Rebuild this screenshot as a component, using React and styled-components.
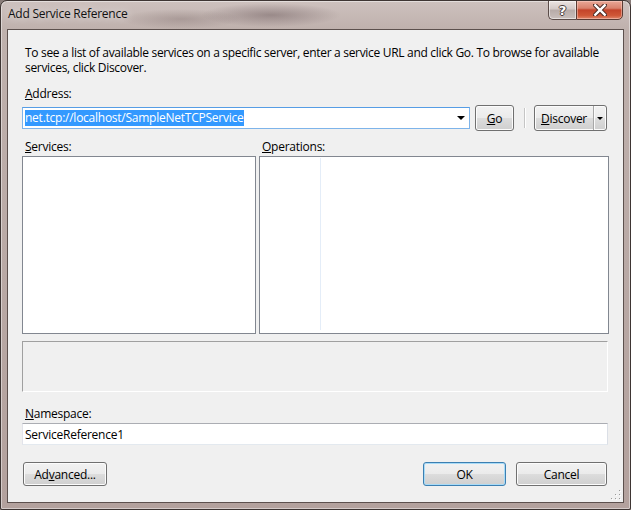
import React from 'react'
import styled, { createGlobalStyle } from 'styled-components'

const GlobalStyle = createGlobalStyle`
  html, body {
    margin: 0;
    padding: 0;
    background: #8a7d7a;
  }
  * { box-sizing: border-box; }
`

const FONT = `"Open Sans", "Noto Sans", sans-serif`

const Window = styled.div`
  width: 631px;
  height: 510px;
  display: flex;
  flex-direction: column;
  border: 1px solid #3e3533;
  border-radius: 7px 7px 2px 2px;
  background:
    radial-gradient(ellipse 70px 12px at 270px 14px, rgba(70, 50, 55, 0.35), transparent),
    radial-gradient(ellipse 60px 10px at 180px 18px, rgba(90, 70, 70, 0.25), transparent),
    linear-gradient(180deg, #cdc1be 0px, #bfb1ad 28px, #b3a19d 100%);
  box-shadow: inset 0 0 0 1px rgba(255, 255, 255, 0.45);
  font-family: ${FONT};
  font-size: 12px;
  letter-spacing: -0.25px;
  color: #000;
  overflow: hidden;
`

const TitleBar = styled.div`
  height: 28px;
  display: flex;
  align-items: flex-start;
`

const Title = styled.div`
  padding: 5px 0 0 7px;
  font-size: 12px;
  line-height: 16px;
  color: #111;
  text-shadow: 0 0 8px rgba(255, 255, 255, 0.9);
`

const Caption = styled.div`
  margin-left: auto;
  margin-right: 7px;
  margin-top: -1px;
  display: flex;
`

const HelpButton = styled.div`
  width: 28px;
  height: 20px;
  border: 1px solid #5b4c49;
  border-right: none;
  border-radius: 0 0 0 5px;
  background: linear-gradient(180deg, #ece4e2 0%, #d3c8c6 45%, #b7aba8 50%, #c9bfbc 100%);
  box-shadow: inset 0 0 0 1px rgba(255, 255, 255, 0.5);
  display: flex;
  align-items: center;
  justify-content: center;
  font-family: "DejaVu Sans", sans-serif;
  font-weight: bold;
  font-size: 13px;
  letter-spacing: 0;
  color: #fff;
  text-shadow: -1px 0 #4a3c3a, 1px 0 #4a3c3a, 0 -1px #4a3c3a, 0 1px #4a3c3a;
`

const CloseButton = styled.div`
  width: 47px;
  height: 20px;
  border: 1px solid #5b3b33;
  border-radius: 0 0 5px 0;
  background: linear-gradient(180deg, #eaa897 0%, #d9826d 40%, #c4442a 50%, #cf5737 80%, #e0866a 100%);
  box-shadow: inset 0 0 0 1px rgba(255, 220, 210, 0.45);
  display: flex;
  align-items: center;
  justify-content: center;
`

const Client = styled.div`
  position: relative;
  flex: 1;
  margin: 0 6px 6px 6px;
  border: 1px solid #5c504d;
  background: #f0f0f0;
  padding: 15px 14px 0 14px;
  display: flex;
  flex-direction: column;
`

const Intro = styled.p`
  margin: 0;
  padding-left: 3px;
  line-height: 15px;
  letter-spacing: -0.31px;
  white-space: nowrap;
`

const Label = styled.div`
  margin-top: ${p => p.$top || 0}px;
  padding-left: 3px;
  line-height: 15px;
  white-space: nowrap;
`

const AddressRow = styled.div`
  margin-top: 4px;
  height: 26px;
  display: flex;
  align-items: center;
`

const Combo = styled.div`
  width: 448px;
  height: 22px;
  background: #fff;
  border: 1px solid #7eb4ea;
  border-top-color: #569de5;
  display: flex;
  align-items: center;
  padding-left: 2px;
`

const Selected = styled.span`
  background: #3399ff;
  color: #fff;
  line-height: 16px;
  padding-right: 1px;
`

const ComboArrow = styled.div`
  margin-left: auto;
  margin-right: 4px;
  width: 0;
  height: 0;
  border-left: 4px solid transparent;
  border-right: 4px solid transparent;
  border-top: 4px solid #000;
`

const Button = styled.div`
  width: ${p => p.$w}px;
  height: ${p => p.$h || 24}px;
  margin-left: ${p => p.$left || 0}px;
  border: 1px solid ${p => (p.$default ? '#3c7fb1' : '#707070')};
  border-radius: 3px;
  background: linear-gradient(180deg, #f2f2f2 0%, #ebebeb 49%, #dddddd 50%, #cfcfcf 100%);
  box-shadow: inset 0 0 0 1px ${p => (p.$default ? '#a8dbf7' : '#fcfcfc')};
  display: flex;
  align-items: center;
  justify-content: center;
  line-height: 15px;
  flex: none;
`

const PushRight = styled.div`
  margin-left: auto;
`

const Separator = styled.div`
  margin-left: 10px;
  width: 1px;
  height: 20px;
  background: #c5c5c5;
  box-shadow: 1px 0 0 #fff;
`

const SplitButton = styled(Button)`
  justify-content: flex-start;
  padding: 0;
`

const SplitText = styled.div`
  width: 59px;
  height: 100%;
  display: flex;
  align-items: center;
  justify-content: center;
  border-right: 1px solid #a8a8a8;
  box-shadow: 1px 0 0 #fafafa;
`

const SplitArrow = styled.div`
  flex: 1;
  display: flex;
  justify-content: center;
  &::after {
    content: '';
    border-left: 3px solid transparent;
    border-right: 3px solid transparent;
    border-top: 3px solid #000;
  }
`

const ListsGrid = styled.div`
  margin-top: 8px;
  display: grid;
  grid-template-columns: 234px 350px;
  column-gap: 3px;
  row-gap: 2px;
`

const ListBox = styled.div`
  height: 178px;
  background: #fff;
  border: 1px solid #828790;
  display: flex;
`

const TreePane = styled.div`
  width: 61px;
  margin: 1px 0 3px 0;
  border-right: 1px solid #e4edf8;
`

const DescBox = styled.div`
  margin-top: 7px;
  width: 586px;
  height: 51px;
  border: 1px solid #a0a0a0;
  border-right-color: #fff;
  border-bottom-color: #fff;
  background: #f0f0f0;
`

const TextBox = styled.div`
  margin-top: 2px;
  width: 586px;
  height: 22px;
  background: #fff;
  border: 1px solid #e3e9ef;
  border-top-color: #abadb3;
  border-left-color: #e2e3ea;
  border-right-color: #dbdfe6;
  padding-left: 2px;
  display: flex;
  align-items: center;
`

const ButtonRow = styled.div`
  margin-top: 17px;
  display: flex;
  padding-left: 1px;
  padding-right: 2px;
`

const Grip = styled.svg`
  position: absolute;
  right: 1px;
  bottom: 1px;
`

function SizeGrip() {
  const dots = [[9, 1], [9, 5], [5, 5], [9, 9], [5, 9], [1, 9]]
  return (
    <Grip width="12" height="12" viewBox="0 0 12 12">
      {dots.map(([x, y]) => (
        <g key={`${x}-${y}`}>
          <rect x={x + 1} y={y + 1} width="1" height="1" fill="#fff" />
          <rect x={x} y={y} width="1" height="1" fill="#9a9a9a" />
        </g>
      ))}
    </Grip>
  )
}

function CloseGlyph() {
  return (
    <svg width="14" height="12" viewBox="0 0 14 12">
      <path d="M2 1 L12 11 M12 1 L2 11" stroke="#4a2a24" strokeWidth="4.4" strokeLinecap="square" />
      <path d="M2.3 1.3 L11.7 10.7 M11.7 1.3 L2.3 10.7" stroke="#fff" strokeWidth="2.4" strokeLinecap="square" />
    </svg>
  )
}

function App() {
  return (
    <>
      <GlobalStyle />
      <Window>
        <TitleBar>
          <Title>Add Service Reference</Title>
          <Caption>
            <HelpButton>?</HelpButton>
            <CloseButton><CloseGlyph /></CloseButton>
          </Caption>
        </TitleBar>
        <Client>
          <Intro>
            To see a list of available services on a specific server, enter a service URL and click Go. To browse for available
            <br />
            services, click Discover.
          </Intro>
          <Label $top={11}><u>A</u>ddress:</Label>
          <AddressRow>
            <Combo>
              <Selected>net.tcp://localhost/SampleNetTCPService</Selected>
              <ComboArrow />
            </Combo>
            <Button $w={39} $h={26} $left={5}><u>G</u>o</Button>
            <Separator />
            <SplitButton $w={73} $h={26} $left={9}>
              <SplitText><u>D</u>iscover</SplitText>
              <SplitArrow />
            </SplitButton>
          </AddressRow>
          <ListsGrid>
            <Label><u>S</u>ervices:</Label>
            <Label><u>O</u>perations:</Label>
            <ListBox />
            <ListBox>
              <TreePane />
            </ListBox>
          </ListsGrid>
          <DescBox />
          <Label $top={14}><u>N</u>amespace:</Label>
          <TextBox>ServiceReference1</TextBox>
          <ButtonRow>
            <Button $w={84}>Ad<u>v</u>anced...</Button>
            <PushRight />
            <Button $w={83} $default>OK</Button>
            <Button $w={91} $left={10}>Cancel</Button>
          </ButtonRow>
          <SizeGrip />
        </Client>
      </Window>
    </>
  )
}

export default App
